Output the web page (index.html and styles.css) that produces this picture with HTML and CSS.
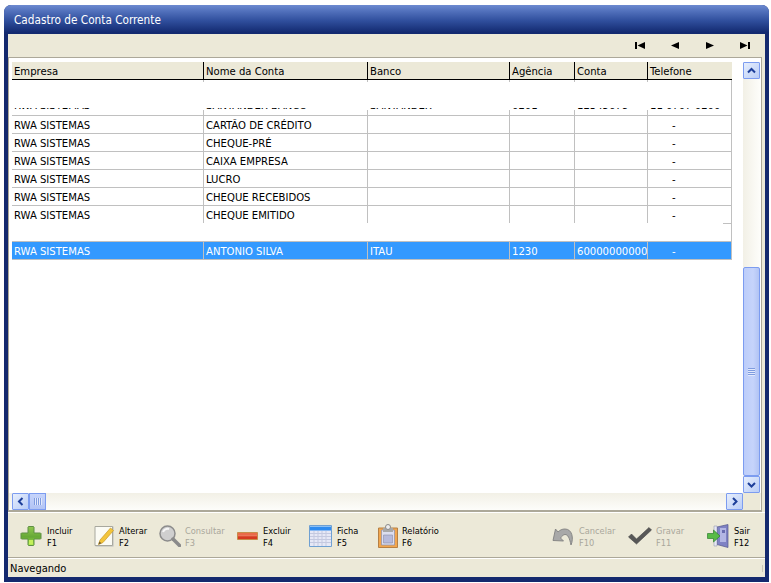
FILE: index.html
```html
<!DOCTYPE html>
<html lang="pt">
<head>
<meta charset="utf-8">
<title>Cadastro de Conta Corrente</title>
<link rel="stylesheet" href="styles.css">
</head>
<body>
<div class="window">
  <div class="titlebar">Cadastro de Conta Corrente</div>
  <div class="client">
    <div class="navbar">
      <svg class="nav end" viewBox="0 0 10 7"><path d="M0 0h2v7H0zM2.500 3.500 10 0v7z"/></svg>
      <svg class="nav" viewBox="0 0 8 7"><path d="M0 3.500 8 0v7z"/></svg>
      <svg class="nav mid" viewBox="0 0 8 7"><path d="M8 3.500 0 0v7z"/></svg>
      <svg class="nav end" viewBox="0 0 10 7"><path d="M8 0h2v7H8zM7.500 3.500 0 0v7z"/></svg>
    </div>
    <div class="panel">
      <div class="panel-top">
        <div class="grid">
          <div class="row head"><div>Empresa</div><div>Nome da Conta</div><div>Banco</div><div>Agência</div><div>Conta</div><div>Telefone</div></div>
          <div class="row blank-top"><div></div><div></div><div></div><div></div><div></div><div></div></div>
          <div class="row clipped"><div><span>RWA SISTEMAS</span></div><div><span>SANTANDER BANCO</span></div><div><span>SANTANDER</span></div><div><span>0201</span></div><div><span>12345678</span></div><div><span>11 0707 0200</span></div></div>
          <div class="row"><div>RWA SISTEMAS</div><div>CARTÃO DE CRÉDITO</div><div></div><div></div><div></div><div class="tel">-</div></div>
          <div class="row"><div>RWA SISTEMAS</div><div>CHEQUE-PRÉ</div><div></div><div></div><div></div><div class="tel">-</div></div>
          <div class="row"><div>RWA SISTEMAS</div><div>CAIXA EMPRESA</div><div></div><div></div><div></div><div class="tel">-</div></div>
          <div class="row"><div>RWA SISTEMAS</div><div>LUCRO</div><div></div><div></div><div></div><div class="tel">-</div></div>
          <div class="row"><div>RWA SISTEMAS</div><div>CHEQUE RECEBIDOS</div><div></div><div></div><div></div><div class="tel">-</div></div>
          <div class="row last"><div>RWA SISTEMAS</div><div>CHEQUE EMITIDO</div><div></div><div></div><div></div><div class="tel">-</div></div>
          <div class="gap"></div>
          <div class="row selected"><div>RWA SISTEMAS</div><div>ANTONIO SILVA</div><div>ITAU</div><div>1230</div><div>600000000000000</div><div class="tel">-</div></div>
        </div>
        <div class="vscroll">
          <div class="sbtn"><svg viewBox="0 0 9 9"><path d="M1 6.500l3.500-3.500L8 6.500"/></svg></div>
          <div class="vtrack"></div>
          <div class="vthumb"><i></i></div>
          <div class="sbtn"><svg viewBox="0 0 9 9"><path d="M1 3l3.500 3.500L8 3"/></svg></div>
        </div>
      </div>
      <div class="hscroll">
        <div class="sbtn"><svg viewBox="0 0 9 9"><path d="M6.500 1L3 4.500 6.500 8"/></svg></div>
        <div class="hthumb"><i></i></div>
        <div class="htrack"></div>
        <div class="sbtn"><svg viewBox="0 0 9 9"><path d="M3 1l3.500 3.500L3 8"/></svg></div>
        <div class="corner"></div>
      </div>
    </div>
    <div class="toolbar">
      <div class="tool t-incluir">
        <svg class="ico" viewBox="0 0 22 22"><defs><linearGradient id="gp" x1="0" y1="0" x2="0" y2="1"><stop offset="0" stop-color="#92c850"/><stop offset=".55" stop-color="#66a836"/><stop offset="1" stop-color="#a5e64a"/></linearGradient></defs><path d="M8.500 1.500h5l.5.500v6h6.500l.5.500v5l-.5.500H14v6l-.5.500h-5l-.5-.500v-6H1.500L1 13.500v-5l.5-.500H8V2z" fill="url(#gp)" stroke="#5f8f45"/><path d="M9 15h4v4.500H9z" fill="#c4f05c"/></svg>
        <span>Incluir<br>F1</span>
      </div>
      <div class="tool t-alterar">
        <svg class="ico" viewBox="0 0 22 22"><path d="M2 1h18l1 1v19l-1 1H3l-1-1z" fill="#d2d2ca"/><path d="M2 1.500h17.500v19H2z" fill="#fbfbf4" stroke="#a8a89e"/><path d="M17.500 3l3 2.500L10 17.500l-4.500 2 1.500-4.500z" fill="#f3c53a" stroke="#c89a28" stroke-width=".7"/><path d="M5.500 19.500l.8-3 2.200 1.800z" fill="#6e5a30"/></svg>
        <span>Alterar<br>F2</span>
      </div>
      <div class="tool t-consultar off">
        <svg class="ico" viewBox="0 0 22 22"><circle cx="8.500" cy="8.500" r="7.500" fill="#cfcfcf" stroke="#8c8c8c" stroke-width="1.500"/><path d="M4 7a5 5 0 0 1 6-3" stroke="#f6f6f6" stroke-width="2" fill="none"/><path d="M14 14l6.500 6.500" stroke="#8a8a8a" stroke-width="3.500" stroke-linecap="round"/></svg>
        <span>Consultar<br>F3</span>
      </div>
      <div class="tool t-excluir">
        <svg class="ico" viewBox="0 0 22 22"><path d="M.5 7.500h20v7H.5z" fill="#d53a20" stroke="#c08a3c" stroke-width=".8"/><path d="M1 8h19v2.500H1z" fill="#ea6a48"/><path d="M1 10.500h19v.7H1z" fill="#f4a080"/></svg>
        <span>Excluir<br>F4</span>
      </div>
      <div class="tool t-ficha">
        <svg class="ico" viewBox="0 0 23 22"><path d="M.5.500h22v21H.5z" fill="#e6e8f6" stroke="#6fa0d2"/><path d="M1 1h21v4.500H1z" fill="#2f8cf0"/><path d="M1 1h21v1H1z" fill="#8cc0f4"/><path d="M1 8.500h21M1 11.500h21M1 14.500h21M1 17.500h21M5 6v15M9 6v15M13 6v15M17 6v15" stroke="#c4c9e0" stroke-width="1"/></svg>
        <span>Ficha<br>F5</span>
      </div>
      <div class="tool t-relatorio">
        <svg class="ico" viewBox="0 0 22 24"><path d="M1.500 4h19v19.500h-19z" fill="#f2a64e" stroke="#b68044"/><path d="M4.500 6h13v15h-13z" fill="#dcdef0" stroke="#8c8ea8" stroke-width=".7"/><path d="M6 4h10v4H6z" fill="#a8a8a8"/><circle cx="11" cy="3" r="2.500" fill="#eee" stroke="#8a8a8a"/><path d="M6.500 11h9v8h-9z" fill="#b6badc" stroke="#8c8ea8" stroke-width=".6"/></svg>
        <span>Relatório<br>F6</span>
      </div>
      <div class="tool t-cancelar off">
        <svg class="ico" viewBox="0 0 22 22"><path d="M19 20c3-7 1-16-6-16-3 0-5 1-7 3L3.500 4 1 15.500l10.500.5L8.500 13c1.500-2 3-3.500 4.500-3.500 3 0 4.500 3.500 6 10.500z" fill="#a8a8a8" stroke="#808080" stroke-width=".9"/></svg>
        <span>Cancelar<br>F10</span>
      </div>
      <div class="tool t-gravar off">
        <svg class="ico" viewBox="0 0 24 22"><path d="M.5 12l3-3 5 5L21 2.500 23.500 5 8.500 19z" fill="#575757" stroke="#444" stroke-width=".6" stroke-linejoin="round"/></svg>
        <span>Gravar<br>F11</span>
      </div>
      <div class="tool t-sair">
        <svg class="ico" viewBox="0 0 22 24"><path d="M10 3l11-2.500v23l-11-3z" fill="#7f82c4" stroke="#55588c" stroke-width=".7"/><path d="M13 4h6v14h-6z" fill="#b3b6e4"/><path d="M15 6h3v3h-3z" fill="#6a6db0"/><path d="M7 2h3v20H7z" fill="#e6e8f4" stroke="#8a8ca8" stroke-width=".5"/><path d="M.5 9.500h6V6l6.500 6-6.500 6v-3.500h-6z" fill="#58bb46" stroke="#2f8030" stroke-width=".7"/></svg>
        <span>Sair<br>F12</span>
      </div>
    </div>
    <div class="status">Navegando</div>
  </div>
</div>
</body>
</html>
```
FILE: styles.css
```css
* { box-sizing: border-box; }
html, body { margin: 0; height: 100%; background: #fff; overflow: hidden; }
body { padding: 5px 2px 0 4px; font-family: "DejaVu Sans", "Noto Sans", sans-serif; font-stretch: condensed; font-size: 11px; color: #000; }
.window { height: 577px; background: #14296e; border-radius: 7px 7px 0 0; padding: 0 4px 5px 4px; display: flex; flex-direction: column; }
.titlebar { height: 29px; flex: none; margin: 0 -4px; padding: 6px 0 0 10px; color: #fff; font-size: 11.7px; line-height: 18px; border-radius: 7px 7px 0 0; background: linear-gradient(#6d8ad0 0, #5372bd 20%, #2f4e9c 55%, #132a70 95%); }
.client { flex: 1; display: flex; flex-direction: column; background: #ece9d8; min-height: 0; }
.navbar { height: 23px; flex: none; display: flex; justify-content: flex-end; align-items: center; padding: 0 15px 0 0; gap: 26px; }
.nav { width: 8px; height: 7px; display: block; fill: #000; }
.nav.end { width: 10px; }
.nav.mid { margin-left: 1px; }
.panel { flex: none; height: 455px; margin-right: 3px; border: 1px solid #aca899; border-width: 1px 1px 2px 1px; background: #fff; display: flex; flex-direction: column; padding-top: 4px; }
.panel-top { flex: 1; display: flex; min-height: 0; justify-content: space-between; padding-right: 1px; }
.grid { width: 720px; margin-left: 3px; }
.row { display: grid; grid-template-columns: 192px 164px 142px 65px 73px 83px; height: 18px; border-bottom: 1px solid #c0c0c0; border-right: 1px solid #c0c0c0; line-height: 17px; }
.row > div { padding: 1px 0 0 2px; border-right: 1px solid #c0c0c0; white-space: nowrap; overflow: hidden; font-size: 11.2px; }
.row > div:last-child { border-right: 0; }
.head { background: #ece9d8; border-bottom: 1px solid #000; border-right: 0; }
.head > div { border-right: 1px solid #000; line-height: 17px; }
.blank-top { height: 28px; border-bottom: 0; }
.blank-top > div { border-right: 0; background: linear-gradient(#c0c0c0, #c0c0c0) right top / 1px 2px no-repeat; }
.blank-top > div:last-child { background: none; }
.clipped { height: 8px; }
.row.clipped > div { padding-top: 0; border-right: 0; height: 7px; background: linear-gradient(#c0c0c0, #c0c0c0) right bottom / 1px 5px no-repeat; }
.row.clipped > div:last-child { background: none; }
.clipped span { display: block; height: 12px; margin-top: -9px; overflow: hidden; line-height: 14px; }
.row > .tel { padding-left: 24px; }
.last { height: 17px; border-bottom: 0; }
.gap { height: 19px; border-right: 1px solid #c0c0c0; border-bottom: 1px solid #c0c0c0; background: linear-gradient(#c0c0c0, #c0c0c0) right top / 8px 1px no-repeat; }
.selected { background: #3399ff; color: #fff; }
.vscroll { width: 17px; flex: none; display: flex; flex-direction: column; background: #f7f6f1; }
.sbtn { width: 17px; height: 17px; flex: none; background: linear-gradient(135deg, #e6eefc, #b9cdf7); border: 1px solid #7c9cf0; border-radius: 1px; display: flex; align-items: center; justify-content: center; }
.sbtn svg { width: 9px; height: 9px; fill: none; stroke: #1d3f9a; stroke-width: 2; }
.vtrack { height: 188px; flex: none; background: linear-gradient(90deg, #f2f0e6, #fdfdfa); }
.vthumb { flex: 1; width: 17px; background: linear-gradient(90deg, #bccdfa, #c6d4fb 60%, #b2c4f4); border: 1px solid #7c9cf0; border-radius: 2px; display: flex; align-items: center; justify-content: center; }
.vthumb i { width: 7px; height: 8px; background: repeating-linear-gradient(180deg, #7f9cdf 0 1px, #e2e9fc 1px 2px); }
.hscroll { height: 17px; flex: none; display: flex; padding: 0 1px 0 3px; background: linear-gradient(#f2f0e6, #fdfdfa); }
.hthumb { width: 17px; flex: none; background: linear-gradient(#c6d4fb, #b2c4f4); border: 1px solid #7c9cf0; display: flex; align-items: center; justify-content: center; }
.hthumb i { width: 8px; height: 7px; background: repeating-linear-gradient(90deg, #7f9cdf 0 1px, #e2e9fc 1px 2px); }
.htrack { flex: 1; }
.corner { width: 17px; flex: none; background: #ece9d8; }
.toolbar { height: 46px; flex: none; display: flex; align-items: center; border-bottom: 1px solid #aca899; border-top: 1px solid #fff; padding: 2px 0 0 12px; }
.tool { display: flex; align-items: center; font-size: 9.2px; line-height: 12px; color: #000; flex: none; }
.tool span { display: block; margin-top: 2px; }
.off span { color: #a9a79c; }
.ico { width: 22px; height: 22px; display: block; flex: none; margin-right: 5px; }
.t-incluir { width: 73px; }
.t-alterar { width: 66px; }
.t-alterar .ico { margin-right: 4px; }
.t-consultar { width: 78px; }
.t-consultar .ico { margin-right: 4px; }
.t-excluir { width: 72px; }
.t-excluir .ico { margin-right: 4px; }
.t-ficha { width: 68px; }
.t-ficha .ico { width: 23px; }
.t-relatorio { width: 175px; }
.t-relatorio .ico { height: 24px; margin-right: 3px; }
.t-cancelar { width: 76px; }
.t-gravar { width: 79px; }
.t-gravar .ico { width: 24px; margin-right: 4px; }
.t-sair { width: 55px; }
.t-sair .ico { height: 24px; }
.status { height: 19px; flex: none; line-height: 19px; padding-left: 2px; border-top: 1px solid #fff; font-size: 11px; background: linear-gradient(#c9c6b6, #c9c6b6) right 2px center / 1px 7px no-repeat; }
```
